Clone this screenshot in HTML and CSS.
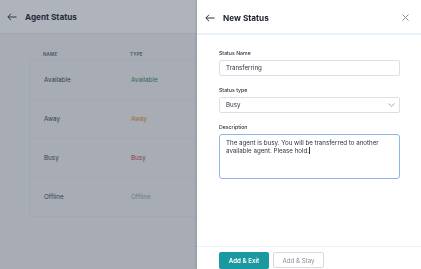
FILE: index.html
```html
<!DOCTYPE html>
<html lang="en">
<head>
    <meta charset="UTF-8">
    <meta name="viewport" content="width=device-width, initial-scale=1.0">
    <title>Agent Status - New Status</title>
    <link rel="stylesheet" href="styles.css">
</head>
<body>

    <!-- Agent Status page (behind the drawer) -->
    <div class="page">
        <div class="page-header">
            <svg class="back-icon" width="10" height="8" viewBox="0 0 10 8">
                <path d="M9.5 4H1M4 0.8L0.8 4L4 7.2" fill="none" stroke="#2c3340" stroke-width="1"/>
            </svg>
            <h1>Agent Status</h1>
        </div>

        <div class="status-table">
            <div class="table-head">
                <span class="col-name">NAME</span>
                <span class="col-type">TYPE</span>
            </div>
            <div class="table-row">
                <span class="col-name">Available</span>
                <span class="col-type type-available">Available</span>
            </div>
            <div class="table-row">
                <span class="col-name">Away</span>
                <span class="col-type type-away">Away</span>
            </div>
            <div class="table-row">
                <span class="col-name">Busy</span>
                <span class="col-type type-busy">Busy</span>
            </div>
            <div class="table-row">
                <span class="col-name">Offline</span>
                <span class="col-type type-offline">Offline</span>
            </div>
        </div>
    </div>

    <!-- Dim overlay -->
    <div class="overlay"></div>

    <!-- New Status drawer -->
    <div class="drawer">
        <div class="drawer-header">
            <svg class="back-icon" width="10" height="8" viewBox="0 0 10 8">
                <path d="M9.5 4H1M4 0.8L0.8 4L4 7.2" fill="none" stroke="#2c3340" stroke-width="1"/>
            </svg>
            <h2>New Status</h2>
            <svg class="close-icon" width="7" height="7" viewBox="0 0 7 7">
                <path d="M0.5 0.5L6.5 6.5M6.5 0.5L0.5 6.5" fill="none" stroke="#8a8f98" stroke-width="1"/>
            </svg>
        </div>

        <div class="drawer-body">
            <label class="field-label">Status Name</label>
            <div class="field">Transferring</div>

            <label class="field-label">Status type</label>
            <div class="field select-field">
                <span>Busy</span>
                <svg width="7" height="4" viewBox="0 0 7 4">
                    <path d="M0.5 0.5L3.5 3.3L6.5 0.5" fill="none" stroke="#9aa0a8" stroke-width="0.9"/>
                </svg>
            </div>

            <label class="field-label">Description</label>
            <div class="field textarea-field">The agent is busy. You will be transferred to another available agent. Please hold.<span class="caret"></span></div>
        </div>

        <div class="drawer-footer">
            <button class="btn btn-primary">Add &amp; Exit</button>
            <button class="btn btn-secondary">Add &amp; Stay</button>
        </div>
    </div>

</body>
</html>
```

FILE: styles.css
```css
body {
    margin: 0;
    font-family: Inter, "Noto Sans", Arial, sans-serif;
    background-color: #f3f3f4;
    height: 269px;
    overflow: hidden;
    color: #2c3340;
}

/* Agent Status page */
.page {
    height: 100%;
}

.page-header {
    height: 34px;
    background-color: #ffffff;
    border-bottom: 1px solid #e7e9ed;
    display: flex;
    align-items: center;
    padding: 1px 0 0 7px;
    box-sizing: border-box;
}

.page-header h1 {
    margin: 0 0 0 8px;
    font-size: 8.2px;
    font-weight: 700;
    color: #1b202a;
}

.status-table {
    margin: 15px 0 0 29px;
}

.table-head {
    display: flex;
    padding-left: 14px;
    height: 11px;
    align-items: center;
    font-size: 4.5px;
    font-weight: 600;
    letter-spacing: 0.2px;
    color: #5a606b;
}

.table-row {
    display: flex;
    align-items: center;
    height: 38px;
    padding-left: 14px;
    border: 1px solid #ebedf0;
    border-bottom: none;
    font-size: 6.3px;
    color: #3a404c;
}

.table-row:last-child {
    border-bottom: 1px solid #ebedf0;
}

.col-name {
    width: 87px;
}

.type-available { color: #2e8a44; }
.type-away { color: #e08a20; }
.type-busy { color: #c8304a; }
.type-offline { color: #9aa0a8; }

/* Overlay */
.overlay {
    position: fixed;
    inset: 0;
    background-color: rgba(52, 65, 88, 0.4);
}

/* Drawer */
.drawer {
    position: fixed;
    top: 0;
    right: 0;
    width: 224px;
    height: 269px;
    background-color: #ffffff;
    box-shadow: -1px 0 2px rgba(0, 0, 0, 0.12);
    display: flex;
    flex-direction: column;
}

.drawer-header {
    height: 33px;
    border-bottom: 2px solid #e9f2f9;
    display: flex;
    align-items: center;
    padding: 2px 12px 0 8px;
    box-sizing: border-box;
    height: 35px;
}

.drawer-header h2 {
    margin: 0 0 0 8px;
    font-size: 8.2px;
    font-weight: 700;
    color: #1b202a;
    flex: 1;
}

.drawer-body {
    flex: 1;
    padding: 13px 21px 0 22px;
    display: flex;
    flex-direction: column;
}

.field-label {
    font-size: 5.2px;
    font-weight: 500;
    color: #2c3340;
    line-height: 10px;
    margin-bottom: 2px;
}

.field {
    height: 14px;
    border: 1px solid #dcdfe4;
    border-radius: 2px;
    padding: 0 4px 0 6px;
    font-size: 6.2px;
    line-height: 14px;
    color: #2c3340;
    margin-bottom: 9px;
}

.select-field {
    display: flex;
    justify-content: space-between;
    align-items: center;
}

.textarea-field {
    height: 37px;
    border-color: #8db6ea;
    border-radius: 3px;
    padding: 4px 6px 2px;
    line-height: 8px;
}

.caret {
    display: inline-block;
    width: 0.7px;
    height: 7px;
    background-color: #2c3340;
    vertical-align: -1px;
}

.drawer-footer {
    height: 23px;
    border-top: 1px solid #e9f2f9;
    display: flex;
    align-items: flex-start;
    gap: 4px;
    padding: 5px 22px 0;
    box-sizing: border-box;
}

.btn {
    font-family: inherit;
    height: 17px;
    border-radius: 2px;
    font-size: 6.2px;
    padding: 0;
    cursor: pointer;
}

.btn-primary {
    width: 50px;
    background-color: #1a9aa0;
    border: none;
    color: #ffffff;
    font-weight: 600;
}

.btn-secondary {
    width: 51px;
    height: 16px;
    background-color: #ffffff;
    border: 1px solid #d6d9de;
    color: #8a8f98;
}
```
